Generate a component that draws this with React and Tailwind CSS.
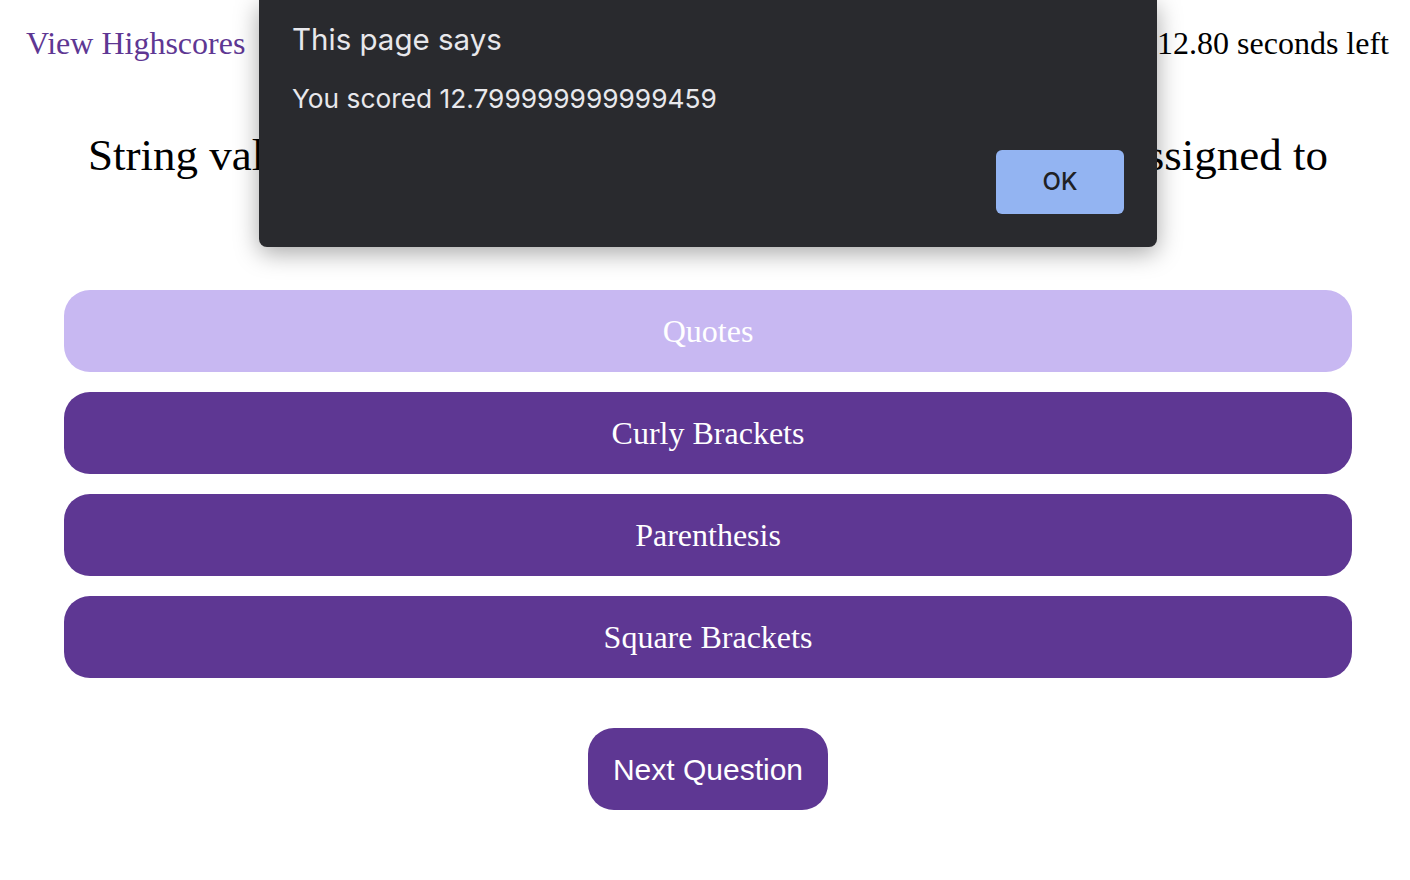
import React from "react";

const answers = ["Quotes", "Curly Brackets", "Parenthesis", "Square Brackets"];

export default function App() {
    const picked = 0;

    return (
        <div className="relative min-h-screen bg-white text-black font-['Liberation_Serif',Georgia,serif]">
            {/* HEADER */}
            <header className="flex items-start justify-between pl-[26px] pr-[21px] pt-[25px] text-[32px] leading-[37px]">
                <a href="#" className="text-[#5e3793]">View Highscores</a>
                <span>Time: 12.80 seconds left</span>
            </header>

            <main className="ml-[64px] mr-[58px]">
                {/* QUESTION */}
                <h2 className="mt-[68px] text-center text-[45px] leading-[50px] font-normal">
                    String values must be enclosed within _____ when being assigned to
                    <br />
                    variables.
                </h2>

                {/* ANSWERS */}
                <div className="mt-[60px] flex flex-col gap-5">
                    {answers.map((a, i) => (
                        <button
                            key={a}
                            className={`h-[82px] w-full rounded-[26px] text-[32px] text-white ${i === picked ? "bg-[#c8b8f2]" : "bg-[#5e3793]"}`}
                        >
                            {a}
                        </button>
                    ))}
                </div>

                <div className="mt-[50px] flex justify-center">
                    <button className="h-[82px] w-[240px] rounded-[26px] bg-[#5e3793] text-white text-[30px] font-['Liberation_Sans',Arial,sans-serif]">
                        Next Question
                    </button>
                </div>
            </main>

            {/* ALERT */}
            <div className="absolute left-[259px] top-0 w-[898px] h-[247px] rounded-b-lg bg-[#292a2e] shadow-[0_6px_24px_rgba(0,0,0,0.35)] font-['Inter',sans-serif]">
                <div className="px-[33px] pt-[19px]">
                    <p className="text-[29.5px] leading-[40px] text-[#e8e8ec]">This page says</p>
                    <p className="mt-[22px] text-[26.3px] leading-[36px] text-[#e8e8ec]">You scored 12.799999999999459</p>
                </div>
                <button className="absolute left-[737px] top-[150px] w-[128px] h-[64px] rounded-[6px] bg-[#93b4f2] text-[#202124] text-[24px] font-medium">
                    OK
                </button>
            </div>
        </div>
    );
}
